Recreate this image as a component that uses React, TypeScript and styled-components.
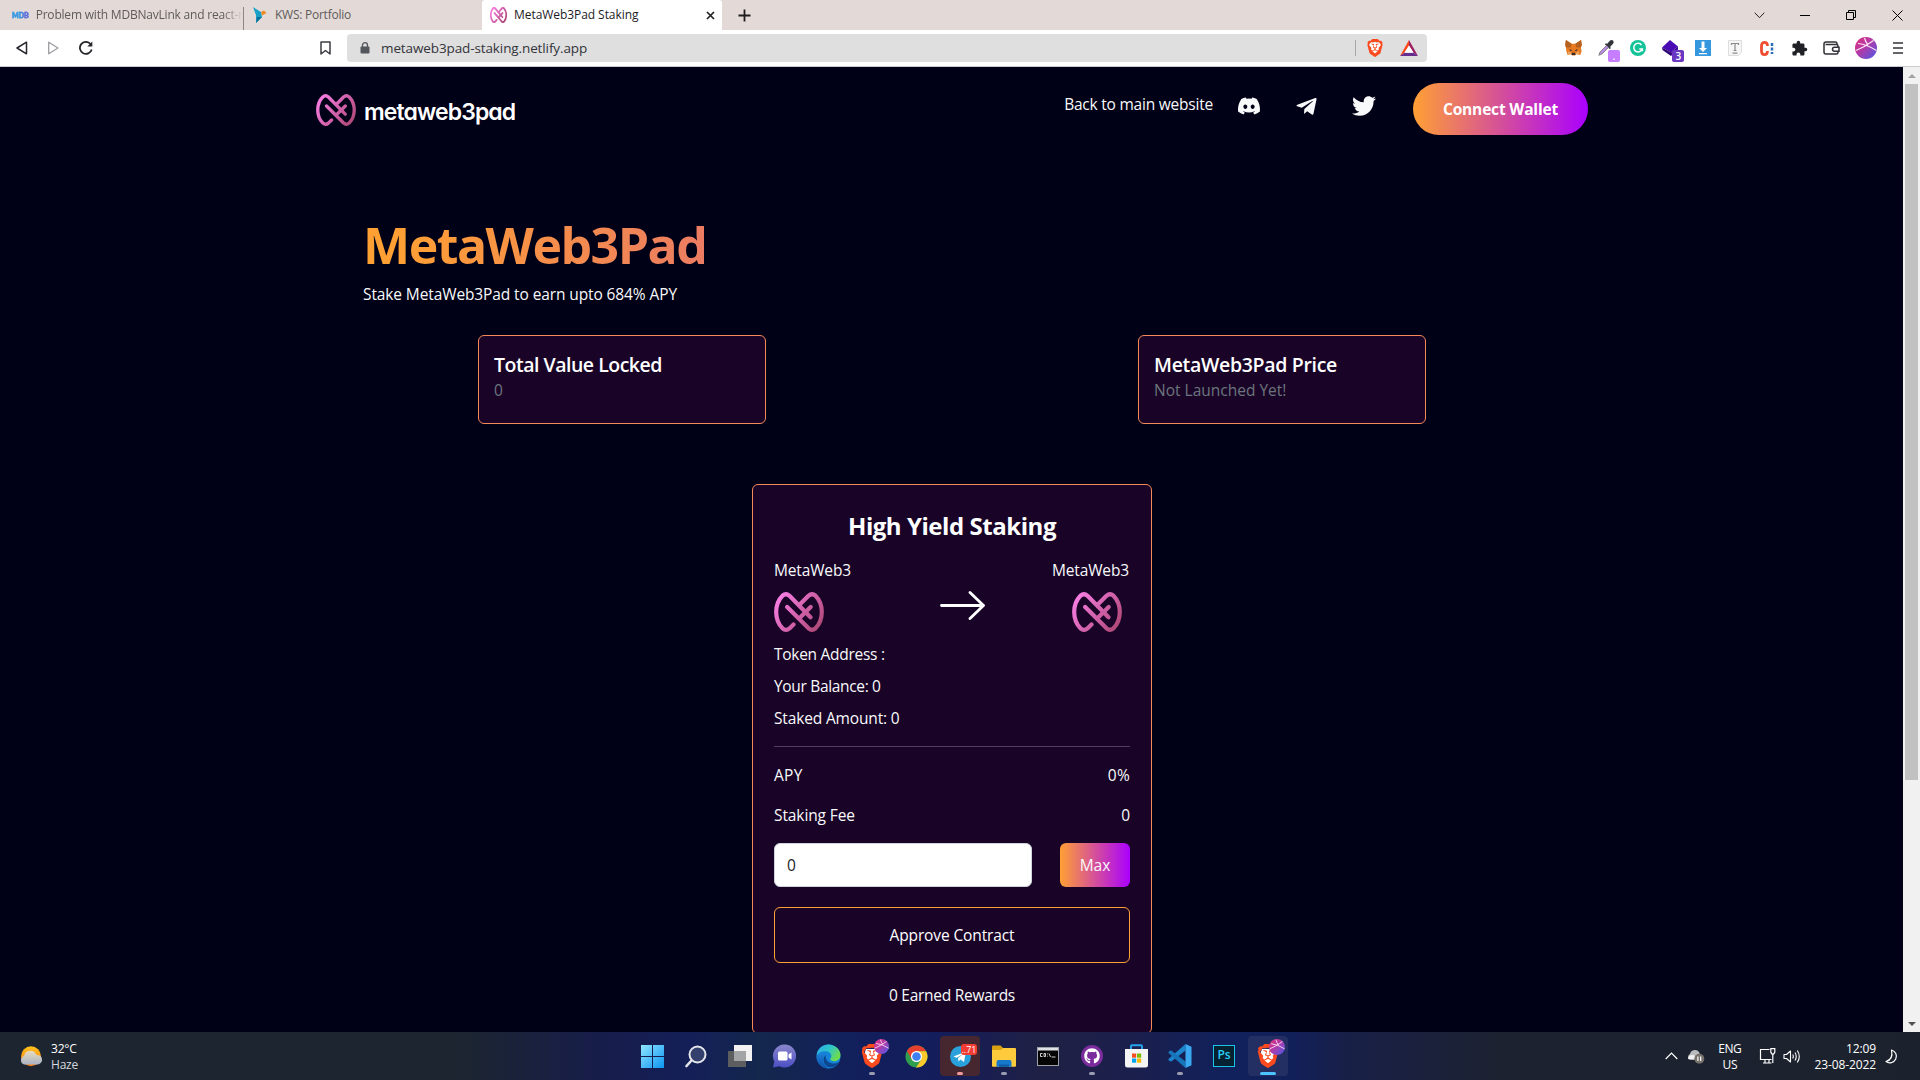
import React from "react";
import styled, { createGlobalStyle } from "styled-components";
import { FaDiscord } from "react-icons/fa6";
import { FaTelegramPlane, FaTwitter, FaGithub } from "react-icons/fa";
import { SiBrave } from "react-icons/si";
import { MdExtension } from "react-icons/md";

const Global = createGlobalStyle`
  * { box-sizing: border-box; }
  body { margin: 0; background: #000016; overflow: hidden; font-family: "Open Sans", "Noto Sans", sans-serif; }
  svg { display: block; flex: none; }
  button { font-family: inherit; cursor: pointer; }
`;

/* ---------- shared text ---------- */
const Text = styled.span<{ $ls?: number; $muted?: boolean }>`
  font-size: 15.5px;
  line-height: 24px;
  letter-spacing: ${(p) => p.$ls ?? -0.15}px;
  color: #f8f9fa;
  white-space: nowrap;
`;

/* ---------- browser frame ---------- */
const Screen = styled.div`
  width: 1920px;
  height: 1080px;
  display: flex;
  flex-direction: column;
  overflow: hidden;
`;

const TabStrip = styled.div`
  flex: none;
  height: 30px;
  background: #e3dad7;
  display: flex;
`;

const Tab = styled.div<{ $width: number; $active?: boolean; $gap: number; $pad: number; $padRight?: number; $ls?: number }>`
  flex: none;
  width: ${(p) => p.$width}px;
  padding: 0 ${(p) => p.$padRight ?? 7}px 0 ${(p) => p.$pad}px;
  display: flex;
  align-items: center;
  gap: ${(p) => p.$gap}px;
  background: ${(p) => (p.$active ? "#fff" : "transparent")};
  border-radius: ${(p) => (p.$active ? "3px 3px 0 0" : "0")};
  color: ${(p) => (p.$active ? "#1c1c1f" : "#5f5a5a")};
  font-size: 12px;
  line-height: 30px;
  letter-spacing: ${(p) => p.$ls ?? 0}px;
`;

const TabTitle = styled.span<{ $fade?: boolean }>`
  flex: 1;
  white-space: nowrap;
  mask-image: ${(p) => (p.$fade ? "linear-gradient(90deg, #000 90%, transparent)" : "none")};
`;

const TabDivider = styled.div`
  width: 1px;
  margin: 7px 0 0;
  height: 23px;
  background: #8c8684;
`;

const MdbMark = styled.span`
  width: 17px;
  font: 900 7px/30px Lato, sans-serif;
  letter-spacing: 0;
  background: linear-gradient(90deg, #2fa4e7 45%, #7a4fd6 75%);
  background-clip: text;
  color: transparent;
  -webkit-text-stroke: 0.4px #3b8fe0;
`;

const NewTab = styled.div`
  width: 44px;
  display: grid;
  place-items: center;
`;

const WindowControls = styled.div`
  margin-left: auto;
  display: flex;
`;

const WindowControl = styled.div`
  width: 46px;
  display: grid;
  place-items: center;
`;

const Toolbar = styled.div`
  flex: none;
  height: 37px;
  background: #fff;
  border-bottom: 1px solid #c9cbce;
  display: flex;
  align-items: center;
  padding: 0 15px;
`;

const NavButtons = styled.div`
  width: 305px;
  display: flex;
  gap: 19px;
`;

const AddressBar = styled.div`
  width: 1080px;
  height: 28px;
  margin-left: 16px;
  border-radius: 4px;
  background: #dfdfdf;
  display: flex;
  align-items: center;
  padding: 0 9px 0 13px;
`;

const Url = styled.span`
  flex: 1;
  margin-left: 11px;
  font-size: 13.5px;
  letter-spacing: -0.11px;
  color: #33343a;
`;

const AddressDivider = styled.div`
  width: 1px;
  height: 16px;
  background: #a7a7a7;
  margin-right: 10px;
`;

const Shields = styled.div`
  display: flex;
  align-items: center;
  gap: 16px;
`;

const Extensions = styled.div`
  margin-left: auto;
  margin-right: 7px;
  display: grid;
  grid-template-columns: repeat(9, 32.3px);
  justify-items: center;
  align-items: center;
`;

const Extension = styled.div`
  position: relative;
  display: grid;
  place-items: center;
`;

const ExtensionBadge = styled.span<{ $bg: string }>`
  position: absolute;
  left: 10px;
  top: 10px;
  width: 12px;
  height: 12px;
  border-radius: 2px;
  background: ${(p) => p.$bg};
  color: #fff;
  font: 600 10px/12px "Open Sans", sans-serif;
  text-align: center;
`;

/* ---------- page ---------- */
const Viewport = styled.div`
  flex: none;
  height: 965px;
  display: flex;
  overflow: hidden;
`;

const Page = styled.main`
  flex: 1;
  height: 965px;
  overflow: hidden;
  background: #000016;
`;

const Header = styled.header`
  width: 1272px;
  height: 84px;
  margin: 0 0 0 316px;
  display: flex;
  align-items: center;
`;

const Brand = styled.div`
  display: flex;
  align-items: center;
  gap: 8px;
  padding-top: 1px;
`;

const BrandName = styled.span`
  padding-top: 4px;
  font: 600 23px/32px Inter, sans-serif;
  font-feature-settings: "cv11";
  letter-spacing: -0.9px;
  color: #fff;
`;

const HeaderNav = styled.nav`
  margin-left: auto;
  display: flex;
  align-items: center;
`;

const Socials = styled.div`
  display: flex;
  align-items: center;
  gap: 34px;
  margin: -6px 37px 0 24px;
  color: #f8f9fa;
`;

const MainSiteLink = styled(Text)`
  margin-top: -11px;
  letter-spacing: -0.22px;
`;

const ConnectButton = styled.button`
  width: 175px;
  height: 52px;
  border: 0;
  border-radius: 26px;
  background: linear-gradient(90deg, #ffa034, #aa00ff);
  color: #fff;
  font-size: 15.5px;
  font-weight: 700;
  letter-spacing: -0.17px;
`;

const Hero = styled.section`
  width: 1176px;
  margin: 58px 0 0 363px;
`;

const HeroTitle = styled.h1`
  margin: 0;
  font-size: 50px;
  line-height: 72px;
  font-weight: 700;
  letter-spacing: -1.5px;
  background: linear-gradient(90deg, #ffa034 3%, #aa00ff 118%);
  background-clip: text;
  color: transparent;
`;

const HeroLead = styled(Text)`
  display: block;
  padding-top: 1px;
  letter-spacing: -0.11px;
`;

const Stats = styled.section`
  width: 948px;
  margin: 29px 0 0 478px;
  display: flex;
  justify-content: space-between;
`;

const StatCard = styled.article`
  width: 288px;
  height: 89px;
  padding: 16px 15px;
  border: 1px solid #f5895a;
  border-radius: 6px;
  background: #190428;
  display: flex;
  flex-direction: column;
`;

const StatTitle = styled.h2<{ $ls: number }>`
  margin: 0;
  font-size: 19.5px;
  line-height: 26px;
  font-weight: 600;
  letter-spacing: ${(p) => p.$ls}px;
  color: #fff;
`;

const StatValue = styled.span`
  font-size: 15.5px;
  line-height: 24px;
  font-weight: 500;
  color: #6c757d;
`;

const StakeCard = styled.section`
  width: 400px;
  height: 550px;
  margin: 60px 0 0 752px;
  padding: 26px 21px 0;
  border: 1px solid #f5895a;
  border-radius: 6px;
  background: #190428;
  display: flex;
  flex-direction: column;
`;

const StakeTitle = styled.h2`
  margin: 0;
  text-align: center;
  font-size: 24px;
  line-height: 30px;
  font-weight: 700;
  letter-spacing: -0.45px;
  color: #fff;
`;

const SwapRow = styled.div`
  margin-top: 17px;
  display: flex;
  justify-content: space-between;
`;

const Token = styled.div`
  width: 78px;
  display: flex;
  flex-direction: column;
  align-items: flex-start;
  gap: 10px;
`;

const EarnToken = styled(Token)`
  & > svg { margin-left: 20px; }
`;

const SwapArrow = styled.div`
  padding: 33px 0 0 21px;
`;

const Facts = styled.div`
  margin-top: 10px;
  display: flex;
  flex-direction: column;
  gap: 8px;
`;

const Rule = styled.hr`
  width: 100%;
  height: 1px;
  margin: 16px 0 0;
  border: 0;
  background: #513f5c;
`;

const RateRow = styled.div`
  margin-top: 16px;
  display: flex;
  justify-content: space-between;
`;

const AmountRow = styled.div`
  margin-top: 16px;
  display: flex;
  justify-content: space-between;
`;

const AmountInput = styled.div`
  width: 258px;
  height: 44px;
  padding: 9px 12px;
  border: 1px solid #ced4da;
  border-radius: 6px;
  background: #fff;
  color: #212529;
  font-size: 15.5px;
  line-height: 24px;
`;

const MaxButton = styled.button`
  width: 70px;
  height: 44px;
  border: 0;
  border-radius: 6px;
  background: linear-gradient(90deg, #ffa034, #aa00ff);
  color: #f8f9fa;
  font-size: 15.5px;
`;

const ApproveButton = styled.button`
  height: 56px;
  margin-top: 20px;
  border: 1px solid #ffa034;
  border-radius: 6px;
  background: transparent;
  color: #fff;
  font-size: 15.5px;
  letter-spacing: -0.12px;
`;

const Earned = styled(Text)`
  margin-top: 20px;
  text-align: center;
  letter-spacing: -0.27px;
`;

const Scrollbar = styled.div`
  width: 17px;
  background: #f1f1f1;
  display: flex;
  flex-direction: column;
  align-items: center;
`;

const ScrollArrow = styled.div`
  height: 17px;
  display: grid;
  place-items: center;
`;

const ScrollThumb = styled.div`
  width: 13px;
  height: 696px;
  margin-bottom: auto;
  background: #c1c1c1;
`;

/* ---------- taskbar ---------- */
const Taskbar = styled.footer`
  flex: none;
  height: 48px;
  display: grid;
  grid-template-columns: 632px 656px 1fr;
  align-items: center;
  background: linear-gradient(90deg, #1c2530 0, #1c2530 460px, #171d4a 600px, #141f58 690px, #14274c 760px, #12205c 850px,
    #131d5c 930px, #1f2044 1040px, #1b1f4c 1130px, #11215c 1230px, #12205a 1290px, #181f46 1350px, #1c2230 1500px, #1c222d 1920px);
`;

const Weather = styled.div`
  display: flex;
  align-items: center;
  gap: 8px;
  padding-left: 19px;
`;

const TrayText = styled.div<{ $align?: string; $ls?: number }>`
  padding-top: 1px;
  font-size: 12px;
  line-height: 16px;
  letter-spacing: ${(p) => p.$ls ?? -0.2}px;
  text-align: ${(p) => p.$align ?? "left"};
  color: #fff;
  white-space: nowrap;
`;

const Dim = styled.div`
  color: #d5d8dc;
`;

const Apps = styled.div`
  display: flex;
  gap: 4px;
`;

const AppSlot = styled.div<{ $bg?: string }>`
  position: relative;
  flex: none;
  width: 40px;
  height: 40px;
  border-radius: 4px;
  background: ${(p) => p.$bg ?? "transparent"};
  display: grid;
  place-items: center;
`;

const RunningMark = styled.span<{ $active?: boolean; $color?: string }>`
  position: absolute;
  bottom: 1px;
  left: 50%;
  transform: translateX(-50%);
  width: ${(p) => (p.$active ? 16 : 6)}px;
  height: 3px;
  border-radius: 2px;
  background: ${(p) => p.$color ?? "#9a9db0"};
`;

const ProfileBadge = styled.span`
  position: absolute;
  right: 3px;
  top: 3px;
`;

const CountBadge = styled.span`
  position: absolute;
  right: 3px;
  top: 8px;
  width: 16px;
  height: 11px;
  border-radius: 3px;
  background: #f23c34;
  color: #fff;
  font: 9px/11px "Open Sans", sans-serif;
  text-align: center;
`;

const PsTile = styled.span`
  width: 22px;
  height: 22px;
  border: 1.5px solid #1fc3e8;
  background: #06212f;
  color: #2bcdf5;
  font: 600 12px/18px "Open Sans", sans-serif;
  text-align: center;
`;

const Tray = styled.div`
  display: flex;
  align-items: center;
  justify-content: flex-end;
  padding-right: 21px;
`;

const Spacer = styled.div<{ $w: number }>`
  width: ${(p) => p.$w}px;
`;

/* ---------- drawings ---------- */
const Svg = styled.svg.attrs({ fill: "none" })``;

function Knot({ w, h, id, bold }: { w: number; h: number; id: string; bold?: boolean }) {
  return (
    <Svg width={w} height={h} viewBox="0 0 50 40" preserveAspectRatio="none">
      <defs>
        <linearGradient id={id} x1="3" y1="3" x2="47" y2="37" gradientUnits="userSpaceOnUse">
          <stop stopColor="#fb80e8" />
          <stop offset="1" stopColor="#ad4774" />
        </linearGradient>
      </defs>
      <g stroke={`url(#${id})`} strokeWidth={bold ? 5 : 4.2} strokeLinecap="round" strokeLinejoin="round">
        <path d="M19.5 32.5 15.5 36.4Q12 39.3 8.5 36.3C4.2 32 2.2 26 2.2 20C2.2 14 4.2 8 8.5 3.7Q12 .8 15.5 3.8L36.5 25.2" />
        <path d="M13.2 15 34.5 36.3Q38 39.3 41.5 36.3C45.8 32 47.8 26 47.8 20C47.8 14 45.8 8 41.5 3.7Q38 .8 34.5 3.8L25.5 12.8" />
        <path d="M36.7 15 26.4 25.2" />
      </g>
    </Svg>
  );
}

function Profile({ size, id }: { size: number; id: string }) {
  return (
    <Svg width={size} height={size} viewBox="0 0 22 22">
      <defs>
        <linearGradient id={id} x1="0" y1="0" x2="1" y2="1">
          <stop stopColor="#e0307c" />
          <stop offset=".45" stopColor="#b23aa8" />
          <stop offset="1" stopColor="#4a5bea" />
        </linearGradient>
      </defs>
      <circle cx="11" cy="11" r="11" fill={`url(#${id})`} />
      <path d="M1 13.500C7 11 13 7.500 18.500 3.500M3 6.500Q12 7.500 21.500 13.500M9.500 1Q10.500 5 13 8" stroke="#ffe3f4" strokeWidth="1.200" />
    </Svg>
  );
}

function Lion({ size }: { size: number }) {
  return (
    <Svg width={size} height={size} viewBox="0 0 24 24">
      <path d="M6 5h12l2 6-3 8-5 3-5-3-3-8z" fill="#fff" />
      <SiBrave size={24} color="#fb4a1e" />
    </Svg>
  );
}

const Fox = () => (
  <Svg width="17" height="16" viewBox="0 0 18 17">
    <path d="M1 0 7 4h4l6-4 .8 5-1 3 .8 4-1.400 4-4-1-1.700 1.500h-3L6.800 15l-4 1L1.400 12 1 8 .2 5z" fill="#e57a21" />
    <path d="M1 0l6 4-1 4-5 0L.2 5zM17 0l-6 4 1 4 5 0 .8-3z" fill="#b5601f" />
    <path d="M4.500 9.500l3 1.500-1.500 1zM13.500 9.500l-3 1.500 1.500 1z" fill="#2b2b33" />
    <path d="M7.300 13.500h3.400l.5 2.500H6.800z" fill="#3a2b26" />
    <path d="M3 12l3 1 1 2-4 1zM15 12l-3 1-1 2 4 1z" fill="#f0a35c" />
  </Svg>
);

const Chrome = () => (
  <Svg width="23" height="23" viewBox="0 0 24 24">
    <circle cx="12" cy="12" r="11.500" fill="#2f9e4f" />
    <path d="M2 6.200A11.500 11.500 0 0 1 22 6.300L12 6.500 7 14.800z" fill="#e8402f" />
    <path d="M12 6.500H22A11.500 11.500 0 0 1 11.500 23.500L17 15z" fill="#fdc92c" />
    <circle cx="12" cy="12" r="5.800" fill="#fff" />
    <circle cx="12" cy="12" r="4.500" fill="#3f80f0" />
  </Svg>
);

const Edge = () => (
  <Svg width="25" height="25" viewBox="0 0 24 24">
    <defs>
      <linearGradient id="edge-wave" x1="0" y1="0" x2="1" y2=".5">
        <stop stopColor="#2aa8e8" />
        <stop offset=".55" stopColor="#2fc6c9" />
        <stop offset="1" stopColor="#6ddc4f" />
      </linearGradient>
      <linearGradient id="edge-body" x1="0" y1="0" x2="0" y2="1">
        <stop stopColor="#1b7fd6" />
        <stop offset="1" stopColor="#0f4fa8" />
      </linearGradient>
    </defs>
    <circle cx="12" cy="12" r="11.500" fill="#1583d8" />
    <path d="M.6 11C1.200 4.800 6 .5 12 .5c6.500 0 11.500 5 11.500 10 0 3.800-2.800 6-6 6-2.500 0-4-.8-4-1.800 0-.8 1.200-1.200 1.200-3.200C14.700 8.800 12 7 8.800 7 5 7 1.800 9 .6 11z" fill="url(#edge-wave)" />
    <path d="M9 10.500c-2.500 2.500-2.500 7.500 1 10.500 4 3 9.500 1 12-3.500-6 3-13 .5-13-7z" fill="#0d4791" />
    <path d="M9 10.500c-3.500 3-3 9.500 3 13C6 23.500.5 18.500.5 12.500 2.500 8.500 7.500 8.500 9 10.500z" fill="url(#edge-body)" />
  </Svg>
);

const VsCode = () => (
  <Svg width="24" height="24" viewBox="0 0 24 24">
    <path d="M17.500 0V6.500L3 17.800.5 16.200V15L17.500 0z" fill="#1c84cc" />
    <path d="M17.500 24V17.500L3 6.200.5 7.800V9L17.500 24z" fill="#1674ba" />
    <path d="M17.500 0 23.500 2.800V21.200L17.500 24z" fill="#3aa9f2" />
  </Svg>
);

export default function App() {
  return (
    <Screen>
      <Global />
      <TabStrip>
        <Tab $width={243} $pad={12} $padRight={1} $gap={7} $ls={-0.2}>
          <MdbMark>MDB</MdbMark>
          <TabTitle $fade>Problem with MDBNavLink and react-r</TabTitle>
        </Tab>
        <TabDivider />
        <Tab $width={238} $pad={8} $gap={8} $ls={-0.25}>
          <Svg width="15" height="16" viewBox="0 0 15 16">
            <path d="M1 0 9 5 10 10 4 16 4 8z" fill="#19a0c9" />
            <path d="M9 5l3-1.500L14.500 6 10 8.500z" fill="#f08a24" />
            <path d="M4 16l1-6 5 0z" fill="#0b6f9a" />
          </Svg>
          <TabTitle>KWS: Portfolio</TabTitle>
        </Tab>
        <Tab $width={240} $pad={8} $gap={7} $active $ls={-0.06}>
          <Knot w={17} h={16} id="knot-tab" bold />
          <TabTitle>MetaWeb3Pad Staking</TabTitle>
          <Svg width="9" height="9" viewBox="0 0 9 9" stroke="#222" strokeWidth="1.700">
            <path d="M1 1l7 7M8 1 1 8" />
          </Svg>
        </Tab>
        <NewTab>
          <Svg width="13" height="13" viewBox="0 0 13 13" stroke="#1c1c1f" strokeWidth="1.800">
            <path d="M6.500 0.500v12M.5 6.500h12" />
          </Svg>
        </NewTab>
        <WindowControls>
          <WindowControl>
            <Svg width="11" height="7" viewBox="0 0 11 7" stroke="#222"><path d="M.7.7l4.800 5 4.800-5" /></Svg>
          </WindowControl>
          <WindowControl>
            <Svg width="10" height="1" viewBox="0 0 10 1"><path d="M0 0h10v1H0z" fill="#000" /></Svg>
          </WindowControl>
          <WindowControl>
            <Svg width="10" height="10" viewBox="0 0 10 10" stroke="#000"><path d="M.5 2.500h7v7h-7zM2.500 2.500v-2h7v7h-2" /></Svg>
          </WindowControl>
          <WindowControl>
            <Svg width="11" height="11" viewBox="0 0 11 11" stroke="#000"><path d="M.5.500l10 10M10.500.5l-10 10" /></Svg>
          </WindowControl>
        </WindowControls>
      </TabStrip>

      <Toolbar>
        <NavButtons>
          <Svg width="13" height="14" viewBox="0 0 13 14" stroke="#25262b" strokeWidth="1.500" strokeLinejoin="round">
            <path d="M11.500 1.200v11.600L2 7z" />
          </Svg>
          <Svg width="13" height="14" viewBox="0 0 13 14" stroke="#9c9da1" strokeWidth="1.300" strokeLinejoin="round">
            <path d="M1.700 1.200v11.600L11 7z" />
          </Svg>
          <Svg width="14" height="14" viewBox="0 0 14 14" stroke="#25262b" strokeWidth="1.800">
            <path d="M12.700 8.500A6 6 0 1 1 11.500 3" />
            <path d="M13.300.5v5H8.300z" fill="#25262b" stroke="none" />
          </Svg>
        </NavButtons>
        <Svg width="11" height="14" viewBox="0 0 11 14" stroke="#3b3c42" strokeWidth="1.500" strokeLinejoin="round">
          <path d="M1 1h9v12L5.500 9.500 1 13z" />
        </Svg>
        <AddressBar>
          <Svg width="10" height="12" viewBox="0 0 10 12">
            <path d="M2.500 5V3.200a2.500 2.500 0 0 1 5 0V5" stroke="#55575f" strokeWidth="1.300" />
            <rect x=".5" y="4.500" width="9" height="7" rx="1" fill="#55575f" />
          </Svg>
          <Url>metaweb3pad-staking.netlify.app</Url>
          <AddressDivider />
          <Shields>
            <Lion size={18} />
            <Svg width="18" height="16" viewBox="0 0 18 16">
              <path d="M9 0v5.500L4.500 12.700 0 16z" fill="#ff4a1c" />
              <path d="M9 0l9 16-4.500-3.300L9 5.500z" fill="#9e1f63" />
              <path d="M0 16h18l-4.500-3.300h-9z" fill="#662d91" />
              <path d="M9 5.500l4.500 7.200h-9z" fill="#fff" />
            </Svg>
          </Shields>
        </AddressBar>
        <Extensions>
          <Extension><Fox /></Extension>
          <Extension>
            <Svg width="16" height="16" viewBox="0 0 16 16">
              <path d="M9 4l3-3.500q2-1 3 0t.3 3L12 7l1 1-1.500 1L7 4.500 8 3z" fill="#33353c" />
              <path d="M8.500 5.500 2 12 .8 15.300 4 14l6.500-6.500z" fill="#b98be0" stroke="#777" strokeWidth=".8" />
            </Svg>
            <ExtensionBadge $bg="#c77dff">.</ExtensionBadge>
          </Extension>
          <Extension>
            <Svg width="16" height="16" viewBox="0 0 16 16">
              <circle cx="8" cy="8" r="8" fill="#15c39a" />
              <path d="M11.500 5A4.300 4.300 0 1 0 12.200 9H9.300M12.400 8.300v3" stroke="#fff" strokeWidth="1.500" />
            </Svg>
          </Extension>
          <Extension>
            <Svg width="16" height="16" viewBox="0 0 16 16">
              <path d="M8 0l8 6.500-7 6-9-5z" fill="#4a0bb5" />
              <path d="M0 7.500l9 5v3.500L.5 10z" fill="#2c0670" />
              <path d="M9 12.500l7-6v3l-7 6.500z" fill="#3b0894" />
            </Svg>
            <ExtensionBadge $bg="#6a35c2">3</ExtensionBadge>
          </Extension>
          <Extension>
            <Svg width="16" height="16" viewBox="0 0 16 16">
              <rect width="16" height="16" fill="#3597dd" />
              <path d="M6.500 1.500h3V8H12l-4 4-4-4h2.500zM4 13h8v1.300H4z" fill="#fff" />
            </Svg>
          </Extension>
          <Extension>
            <Svg width="14" height="16" viewBox="0 0 14 16">
              <path d="M.5.500h13v12l-3 3H.5z" fill="#f6f6f6" stroke="#dedede" />
              <path d="M3.500 5V3.500h7V5M7 3.500v7M5.500 10.500h3M4.500 13.200h5" stroke="#8b8b8b" strokeWidth="1.200" />
            </Svg>
          </Extension>
          <Extension>
            <Svg width="14" height="15" viewBox="0 0 14 15">
              <path d="M7.500 5C7.500 .200 1.500.200 1.500 5v5c0 4.800 6 4.800 6 0" stroke="#f04e30" strokeWidth="2.800" />
              <path d="M12 2v3M12 6.500v3M12 11v2" stroke="#2b6cb8" strokeWidth="2.500" />
            </Svg>
          </Extension>
          <Extension><MdExtension size={17} color="#202124" /></Extension>
          <Extension>
            <Svg width="17" height="14" viewBox="0 0 17 14" stroke="#303136" strokeWidth="1.500">
              <path d="M14 3.500V2.500a1.500 1.500 0 0 0-1.500-1.500H3A2 2 0 0 0 1 3v8a2 2 0 0 0 2 2h10.500a1.500 1.500 0 0 0 1.500-1.500V5a1.500 1.500 0 0 0-1.500-1.500H2.500" />
              <path d="M16 6.200h-4.500a2 2 0 0 0 0 4H16z" fill="#fff" />
            </Svg>
          </Extension>
        </Extensions>
        <Profile size={22} id="profile-toolbar" />
        <Spacer $w={16} />
        <Svg width="10" height="12" viewBox="0 0 10 12" stroke="#33343a" strokeWidth="1.700">
          <path d="M0 1h10M0 6h10M0 11h10" />
        </Svg>
        <Spacer $w={2} />
      </Toolbar>

      <Viewport>
        <Page>
          <Header>
            <Brand>
              <Knot w={40} h={32} id="knot-brand" />
              <BrandName>metaweb3pad</BrandName>
            </Brand>
            <HeaderNav>
              <MainSiteLink>Back to main website</MainSiteLink>
              <Socials>
                <FaDiscord size={24} />
                <FaTelegramPlane size={23} />
                <FaTwitter size={24} />
              </Socials>
              <ConnectButton>Connect Wallet</ConnectButton>
            </HeaderNav>
          </Header>
          <Hero>
            <HeroTitle>MetaWeb3Pad</HeroTitle>
            <HeroLead>Stake MetaWeb3Pad to earn upto 684% APY</HeroLead>
          </Hero>
          <Stats>
            <StatCard>
              <StatTitle $ls={-0.49}>Total Value Locked</StatTitle>
              <StatValue>0</StatValue>
            </StatCard>
            <StatCard>
              <StatTitle $ls={-0.32}>MetaWeb3Pad Price</StatTitle>
              <StatValue>Not Launched Yet!</StatValue>
            </StatCard>
          </Stats>
          <StakeCard>
            <StakeTitle>High Yield Staking</StakeTitle>
            <SwapRow>
              <Token>
                <Text>MetaWeb3</Text>
                <Knot w={50} h={40} id="knot-stake" />
              </Token>
              <SwapArrow>
                <Svg width="45" height="29" viewBox="0 0 45 29" stroke="#fff" strokeWidth="2.800" strokeLinecap="round" strokeLinejoin="round">
                  <path d="M1.500 14.500h42M30 1.500l13.500 13L30 27.500" />
                </Svg>
              </SwapArrow>
              <EarnToken>
                <Text>MetaWeb3</Text>
                <Knot w={50} h={40} id="knot-earn" />
              </EarnToken>
            </SwapRow>
            <Facts>
              <Text $ls={-0.28}>Token Address :</Text>
              <Text $ls={-0.33}>Your Balance: 0</Text>
              <Text $ls={-0.15}>Staked Amount: 0</Text>
            </Facts>
            <Rule />
            <RateRow>
              <Text $ls={0.3}>APY</Text>
              <Text $ls={0.3}>0%</Text>
            </RateRow>
            <RateRow>
              <Text $ls={-0.1}>Staking Fee</Text>
              <Text $ls={0}>0</Text>
            </RateRow>
            <AmountRow>
              <AmountInput>0</AmountInput>
              <MaxButton>Max</MaxButton>
            </AmountRow>
            <ApproveButton>Approve Contract</ApproveButton>
            <Earned>0 Earned Rewards</Earned>
          </StakeCard>
        </Page>
        <Scrollbar>
          <ScrollArrow>
            <Svg width="8" height="4" viewBox="0 0 8 4"><path d="M0 4 4 0l4 4z" fill="#a3a3a3" /></Svg>
          </ScrollArrow>
          <ScrollThumb />
          <ScrollArrow>
            <Svg width="8" height="4" viewBox="0 0 8 4"><path d="M0 0l4 4 4-4z" fill="#505050" /></Svg>
          </ScrollArrow>
        </Scrollbar>
      </Viewport>

      <Taskbar>
        <Weather>
          <Svg width="24" height="21" viewBox="0 0 24 21">
            <defs>
              <linearGradient id="sun" x1="0" y1="0" x2="0" y2="1">
                <stop stopColor="#ffc21c" />
                <stop offset="1" stopColor="#f57a14" />
              </linearGradient>
              <linearGradient id="cloud" x1="0" y1="0" x2="0" y2="1">
                <stop stopColor="#e9dcc0" />
                <stop offset="1" stopColor="#a9b4c4" />
              </linearGradient>
            </defs>
            <circle cx="12" cy="10.300" r="10" fill="url(#sun)" />
            <path d="M5 18.500a4.500 4.500 0 0 1 0-8.500 6.500 6.500 0 0 1 12.500-1 4.800 4.800 0 0 1 1.500 9.500z" fill="url(#cloud)" />
          </Svg>
          <TrayText>
            32°C
            <Dim>Haze</Dim>
          </TrayText>
        </Weather>

        <Apps>
          <AppSlot>
            <Svg width="23" height="23" viewBox="0 0 23 23">
              <defs>
                <linearGradient id="win" x1="0" y1="0" x2="1" y2="1">
                  <stop stopColor="#8fe6ff" />
                  <stop offset="1" stopColor="#0d95f2" />
                </linearGradient>
              </defs>
              <path d="M0 0h11v11H0zM12 0h11v11H12zM0 12h11v11H0zM12 12h11v11H12z" fill="url(#win)" />
            </Svg>
          </AppSlot>
          <AppSlot>
            <Svg width="22" height="23" viewBox="0 0 22 23" stroke="#e4e6ea" strokeLinecap="round">
              <circle cx="12.500" cy="9.500" r="8" fill="#33406e" strokeWidth="2" />
              <path d="M6.500 15.500 1.500 21" strokeWidth="2.600" />
            </Svg>
          </AppSlot>
          <AppSlot>
            <Svg width="24" height="22" viewBox="0 0 24 22">
              <rect x="6" width="18" height="16" fill="#f2f2f2" />
              <rect y="6" width="18" height="16" fill="#5d5e60" />
              <rect x="6" y="6" width="12" height="10" fill="#a3a4a6" />
            </Svg>
          </AppSlot>
          <AppSlot>
            <Svg width="24" height="24" viewBox="0 0 24 24">
              <defs>
                <linearGradient id="chat" x1="0" y1="0" x2="0" y2="1">
                  <stop stopColor="#8a86cc" />
                  <stop offset="1" stopColor="#4c4fc4" />
                </linearGradient>
              </defs>
              <path d="M12.500.5a11.500 11.500 0 1 1-5 21.800L1 23.500 2.300 17.500A11.500 11.500 0 0 1 12.500.5z" fill="url(#chat)" />
              <rect x="6" y="7.500" width="9.500" height="9" rx="1.500" fill="#fff" />
              <path d="M16.500 10.500l3-2v7l-3-2z" fill="#fff" />
            </Svg>
          </AppSlot>
          <AppSlot><Edge /></AppSlot>
          <AppSlot>
            <Lion size={24} />
            <ProfileBadge><Profile size={15} id="profile-brave-1" /></ProfileBadge>
            <RunningMark />
          </AppSlot>
          <AppSlot><Chrome /></AppSlot>
          <AppSlot $bg="#46272f">
            <Svg width="21" height="21" viewBox="0 0 21 21">
              <circle cx="10.500" cy="10.500" r="10.500" fill="#2aa1da" />
              <path d="M3.500 10.500 16 5.500l-2 10.500-3.500-2.500-2 2-.5-3.500 5-4-6.300 3.700z" fill="#fff" />
            </Svg>
            <CountBadge>..71</CountBadge>
            <RunningMark $color="#f19aa0" />
          </AppSlot>
          <AppSlot>
            <Svg width="24" height="22" viewBox="0 0 24 22">
              <path d="M0 1.500Q0 .500 1 .500h7.500L11 3v5H0z" fill="#d9a012" />
              <path d="M0 5h9l2-2h12q1 0 1 1v17q0 .8-1 .8H1q-1 0-1-.8z" fill="#fdcb3b" />
              <path d="M4.500 21.800V17q0-2 2-2h11q2 0 2 2v4.800z" fill="#1779cc" />
              <path d="M7 19.500h10v2.300H7z" fill="#0e5ba6" />
            </Svg>
            <RunningMark />
          </AppSlot>
          <AppSlot>
            <Svg width="22" height="19" viewBox="0 0 22 19">
              <rect x=".5" y=".5" width="21" height="18" fill="#050505" stroke="#9fa3a8" />
              <rect x="1" y="1" width="20" height="2.500" fill="#dfe2e5" />
              <path d="M5.500 6.500h-2v3h2M7 6.500v3h1.500v-3zM10.500 6.500v.8M10.500 8.800v.7M12 6.500l1.500 3.500M14.500 10h4" stroke="#e8e8e8" strokeWidth=".9" />
            </Svg>
          </AppSlot>
          <AppSlot>
            <Svg width="22" height="22" viewBox="0 0 22 22">
              <circle cx="11" cy="11" r="11" fill="#7b2c9c" />
              <g transform="translate(3 3)"><FaGithub size={16} color="#fff" /></g>
            </Svg>
            <RunningMark />
          </AppSlot>
          <AppSlot>
            <Svg width="23" height="24" viewBox="0 0 23 24">
              <path d="M6 6V2.200q0-1 1-1h9q1 0 1 1V6" stroke="#24a5ee" strokeWidth="1.900" />
              <path d="M0 5h23v16q0 2.500-2.500 2.500h-18Q0 23.500 0 21z" fill="#f4f4f5" />
              <path d="M7 9.500h4.200v4.200H7z" fill="#f25022" />
              <path d="M12 9.500h4.200v4.200H12z" fill="#7fba00" />
              <path d="M7 14.500h4.200v4.200H7z" fill="#00a4ef" />
              <path d="M12 14.500h4.200v4.200H12z" fill="#ffb900" />
            </Svg>
          </AppSlot>
          <AppSlot><VsCode /><RunningMark /></AppSlot>
          <AppSlot><PsTile>Ps</PsTile></AppSlot>
          <AppSlot $bg="#232f62">
            <Lion size={24} />
            <ProfileBadge><Profile size={16} id="profile-brave-2" /></ProfileBadge>
            <RunningMark $active $color="#4cc2ff" />
          </AppSlot>
        </Apps>

        <Tray>
          <Svg width="13" height="8" viewBox="0 0 13 8" stroke="#fff" strokeWidth="1.200"><path d="M.7 7 6.500 1.200 12.300 7" /></Svg>
          <Spacer $w={9} />
          <Svg width="18" height="15" viewBox="0 0 18 15">
            <path d="M3 10.500a3 3 0 0 1 0-5.500 5 5 0 0 1 9.500-1L14 10.500z" fill="#b9bbbf" />
            <path d="M1 9.500q0-3 3.500-3.500 5 0 7 4.500H3q-1.500 0-2-1z" fill="#f1f1f2" />
            <circle cx="12.300" cy="9.700" r="5" fill="#77716c" />
            <path d="M10.900 7.500v4.500M13.700 7.500v4.500" stroke="#fff" strokeWidth="1.200" />
          </Svg>
          <Spacer $w={13} />
          <TrayText $align="center" $ls={-0.45}>ENG<br />US</TrayText>
          <Spacer $w={18} />
          <Svg width="17" height="16" viewBox="0 0 17 16" stroke="#fff" strokeWidth="1.200">
            <path d="M10.500 1.500h-9v10h11M6 12v3M10 12v3M4 15h8.500M13.800 6.500v8.500M11.800.7h4v3.500l-1.300 2h-1.400l-1.300-2z" />
          </Svg>
          <Spacer $w={7} />
          <Svg width="18" height="15" viewBox="0 0 18 15" stroke="#fff" strokeWidth="1.100" strokeLinejoin="round">
            <path d="M1 5.500v4h2.500l4 3.500V2l-4 3.500zM9.700 5.500q1.200 2 0 4M12 3.500q2.500 4 0 8M14.300 1.500q4 6 0 12" />
          </Svg>
          <Spacer $w={13} />
          <TrayText $align="right" $ls={-0.1}>12:09<br />23-08-2022</TrayText>
          <Spacer $w={9} />
          <Svg width="14" height="15" viewBox="0 0 14 15" stroke="#fff" strokeWidth="1.200" strokeLinejoin="round">
            <path d="M6.500 1a6.500 6.500 0 1 1-5.500 11.500Q8.500 10.500 6.500 1z" />
          </Svg>
        </Tray>
      </Taskbar>
    </Screen>
  );
}
